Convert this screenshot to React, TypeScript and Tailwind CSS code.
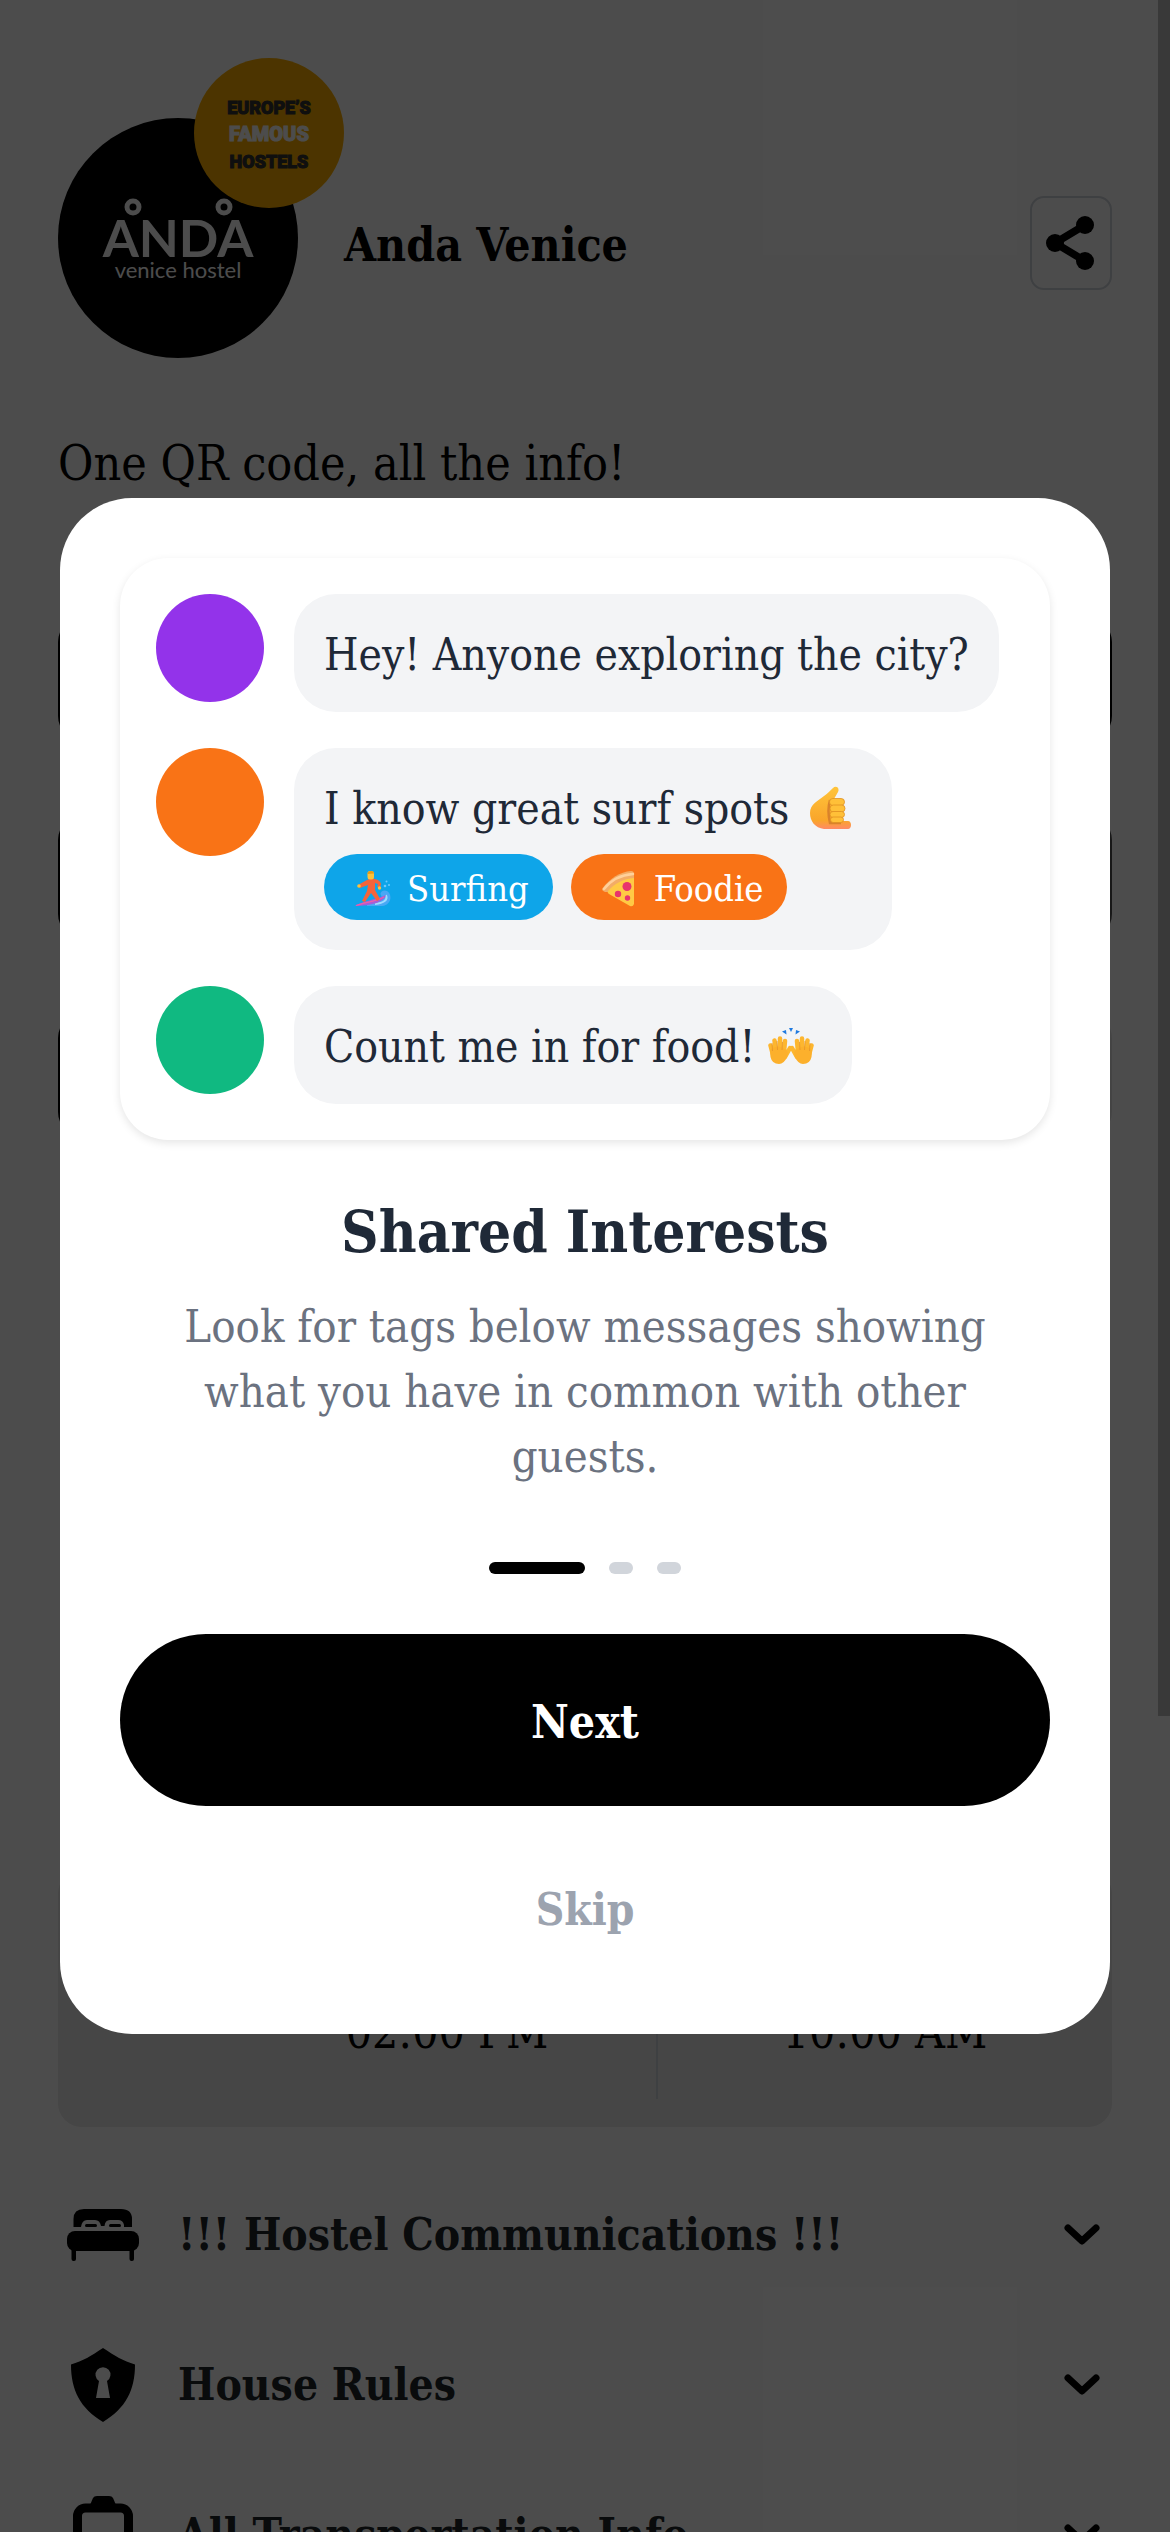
import type { ReactNode } from "react";

function AndaLogo() {
  return (
    <svg viewBox="0 0 240 240" className="size-60" role="img" aria-label="Anda venice hostel">
      <circle cx="120" cy="120" r="120" fill="#000" />
      <g fill="none" stroke="#fff" strokeWidth="5">
        <circle cx="75" cy="89" r="6" />
        <circle cx="166" cy="89" r="6" />
      </g>
      <g fill="#fff" textAnchor="middle" fontFamily="Lato, sans-serif">
        <text x="120" y="139" fontSize="52" fontWeight="700">ANDA</text>
        <text x="120" y="160" fontSize="22">venice hostel</text>
      </g>
    </svg>
  );
}

function FamousHostelsBadge() {
  return (
    <svg
      viewBox="0 0 150 150"
      className="absolute -top-15 left-34 size-[150px]"
      role="img"
      aria-label="Europe's Famous Hostels"
    >
      <circle cx="75" cy="75" r="75" fill="#ffb000" />
      <g textAnchor="middle" fontFamily="Roboto, sans-serif" fontWeight="900">
        <text x="75" y="56" fontSize="18" fill="#333" stroke="#333">EUROPE’S</text>
        <text x="75" y="83" fontSize="20" fill="#fff" stroke="#fff">FAMOUS</text>
        <text x="75" y="110" fontSize="18" fill="#333" stroke="#333">HOSTELS</text>
      </g>
    </svg>
  );
}

function ShareIcon() {
  return (
    <svg viewBox="0 0 50 56" className="h-14 w-[50px]" aria-hidden="true">
      <path d="M39 10 9 28l30 18" fill="none" stroke="#000" strokeWidth="7.5" />
      <circle cx="39" cy="10" r="9" />
      <circle cx="9" cy="28" r="9" />
      <circle cx="39" cy="46" r="9" />
    </svg>
  );
}

function BedIcon() {
  return (
    <svg viewBox="0 0 72 52" className="w-18" aria-hidden="true">
      <path d="M6.500 18V10Q6.500 0 17 0H54Q65 0 65 10V18H57V16Q56 11 51 11H43Q38 11 37.500 17H34Q33 11 28 11H20Q15 11 14 18Z" />
      <rect x="18" y="15" width="12" height="3" rx="1.500" />
      <rect x="42" y="15" width="12" height="3" rx="1.500" />
      <rect y="22" width="72" height="20" rx="8" />
      <rect x="4.500" y="36" width="4.500" height="16" rx="2" />
      <rect x="62.500" y="36" width="4.500" height="16" rx="2" />
    </svg>
  );
}

function ShieldIcon() {
  return (
    <svg viewBox="0 0 64 74" className="w-16" aria-hidden="true">
      <path d="M32 0C20 8 12 13 0 16.500C0 42 9 60 32 74C55 60 64 42 64 16.500C52 13 44 8 32 0Z" />
      <path d="M28 33A7.500 7.500 0 1 1 36 33L39 50H25Z" fill="#fff" />
    </svg>
  );
}

function ClipboardIcon() {
  return (
    <svg viewBox="0 0 60 78" className="w-15" aria-hidden="true">
      <rect x="4.500" y="12" width="51" height="61" rx="8" fill="none" stroke="#000" strokeWidth="9" />
      <path d="M17 16V9L20 2Q21 0 24 0H36Q39 0 40 2L43 9V16Z" />
    </svg>
  );
}

function Chevron() {
  return (
    <svg viewBox="0 0 36 22" className="w-9" aria-hidden="true">
      <path d="M4 4 18 17 32 4" fill="none" stroke="#000" strokeWidth="7" strokeLinecap="round" strokeLinejoin="round" />
    </svg>
  );
}

function CallMeHand() {
  return (
    <svg viewBox="0 0 42 44" className="mr-2.5 ml-2 inline-block h-11 w-[42px] align-[-6px]" role="img" aria-label="call me hand">
      <defs>
        <linearGradient id="hand" x1="0" y1="0" x2="0" y2="1">
          <stop offset="0" stopColor="#ffc43a" />
          <stop offset=".8" stopColor="#f9a52b" />
          <stop offset="1" stopColor="#ff8a65" />
        </linearGradient>
      </defs>
      <path
        d="M23 2C26-1 30 2 28 6L24 13 29 35H38C42 35 42 43 38 43H14C5 42 0 35 0 27C0 18 8 15 14 10C18 7 20 5 23 2Z"
        fill="url(#hand)"
      />
      <path d="M20 14Q17 24 20 37H31" fill="none" stroke="#d9822b" strokeWidth="2.500" />
      <g fill="#ffc038" stroke="#e08f22" strokeWidth=".8">
        <rect x="19.500" y="12.500" width="15" height="7" rx="3.400" />
        <rect x="20" y="19" width="15" height="7" rx="3.400" />
        <rect x="20" y="25.500" width="14.500" height="6" rx="3" />
        <rect x="20.500" y="31" width="13" height="5.500" rx="2.700" />
      </g>
    </svg>
  );
}

function RaisingHands() {
  const hand = (
    <>
      <g fill="none" stroke="#fdb62f" strokeWidth="4.500" strokeLinecap="round">
        <path d="M5 27 2.500 17.500M8 24 6.500 12.500M12 22V10.500M16 24 17 13M17 29 22 20" />
      </g>
      <path d="M2 22Q10 15 18 22Q21 24 19 29Q16 36 11 36Q4 36 2.500 29Z" fill="#fcb02c" />
      <path d="M4.500 23 4 15M9.500 22 9 13M14 22 14.500 14" stroke="#e5942a" strokeWidth=".8" fill="none" />
    </>
  );
  return (
    <svg viewBox="0 0 46 36" className="mr-2 inline-block h-9 w-[46px] align-[-2px]" role="img" aria-label="raising hands">
      {hand}
      <g transform="matrix(-1 0 0 1 46 0)">{hand}</g>
      <path d="M14 3.500 18 2 18.500 6.500ZM21 0H25L23 4ZM28 2 32 3.500 27.500 6.500Z" fill="#1f7ae0" />
    </svg>
  );
}

function Surfer() {
  return (
    <svg viewBox="0 0 36 36" className="size-9" role="img" aria-label="surfer">
      <path d="M12 33C24 31 28 28 26 24C24 22 28 18 32 20C38 24 36 34 27 35H12Z" fill="#4aa8f5" />
      <path d="M20 33C29 32 33 29 31 24" fill="none" stroke="#9fdcff" strokeWidth="2" />
      <path d="M0 35C10 29 20 29 31 24C29 31 16 35 0 35Z" fill="#a45fd6" />
      <path d="M1 34.500C10 31 20 31 29 26" fill="none" stroke="#ef5da8" strokeWidth="1.200" />
      <path d="M12 9Q16 7 20 8Q25 9 26 13L25 17 22 16 23 13 20 12 20 19 25 28 22 30 16 22 10 31 7 30 12 20 13 14 5 17 3 14Z" fill="#f4643a" />
      <circle cx="4" cy="15" r="1.800" fill="#fdc23a" />
      <circle cx="24.500" cy="17" r="1.700" fill="#fdc23a" />
      <rect x="12.500" y="0" width="6.500" height="8.500" rx="2.500" fill="#fdc23a" />
      <path d="M12.500 3Q12.500 0 16 0Q19 0 19 2.500Z" fill="#e59a17" />
      <g fill="#6fc8fb">
        <circle cx="30" cy="15" r="1.300" />
        <circle cx="34" cy="14" r="1" />
        <circle cx="31.500" cy="10.500" r="1" />
      </g>
    </svg>
  );
}

function Pizza() {
  return (
    <svg viewBox="0 0 36 36" className="size-9" role="img" aria-label="pizza">
      <path d="M0 18C8 7 18 1 29 0Q32 0 32 3V9L9 21 3 21Q0 20 0 18Z" fill="#f3ac66" />
      <path d="M2 18C9 9 18 4 31 3" fill="none" stroke="#ffd09a" strokeWidth="2.500" strokeLinecap="round" />
      <path d="M6 20C13 12 21 8 32 7V33Q31 36 28 35L7 23Q5 22 6 20Z" fill="#ffca45" />
      <g fill="#e8336d">
        <circle cx="25" cy="15.500" r="4.500" />
        <circle cx="16" cy="23" r="3.200" />
        <circle cx="25.500" cy="27" r="2.700" />
      </g>
    </svg>
  );
}

function Message({ avatar, children }: { avatar: string; children: ReactNode }) {
  return (
    <li className="flex items-start gap-[30px]">
      <span className={`size-27 shrink-0 rounded-full ${avatar}`} />
      <div className="rounded-[42px] bg-[#f3f4f6] px-[30px] pt-8 pb-7 text-[44px] leading-[58px] text-[#1f2937]">
        {children}
      </div>
    </li>
  );
}

function Tag({ color, icon, label }: { color: string; icon: ReactNode; label: string }) {
  return (
    <span className={`flex h-[66px] items-center gap-4 rounded-full pt-1 pr-6 pl-[31px] text-[36px] text-white ${color}`}>
      {icon}
      {label}
    </span>
  );
}

const sections = [
  { title: "!!! Hostel Communications !!!", icon: <BedIcon /> },
  { title: "House Rules", icon: <ShieldIcon /> },
  { title: "All Transportation Info", icon: <ClipboardIcon /> },
];

export default function App() {
  return (
    <div className="relative h-screen overflow-hidden bg-white font-['Roboto_Slab','DejaVu_Serif_Condensed','DejaVu_Serif',serif] text-black">
      <main className="px-[58px] pt-[118px]">
        <header className="flex h-[250px] items-center">
          <div className="relative self-start">
            <AndaLogo />
            <FamousHostelsBadge />
          </div>
          <h1 className="ml-[46px] flex-1 pt-1 text-[46px] font-bold">Anda Venice</h1>
          <button
            type="button"
            aria-label="Share"
            className="flex h-[94px] w-[82px] items-center justify-center rounded-[14px] border-2 border-gray-300"
          >
            <ShareIcon />
          </button>
        </header>

        <p className="mt-[59px] text-[48px] leading-[72px]">One QR code, all the info!</p>

        <div className="mt-[119px] flex flex-col gap-19">
          <div className="h-[122px] rounded-3xl bg-black" />
          <div className="h-[122px] rounded-3xl bg-linear-to-r from-black to-neutral-600" />
          <div className="h-[122px] rounded-3xl bg-linear-to-r from-black to-neutral-200" />
        </div>

        <section className="mt-[734px] grid h-[257px] grid-cols-[180px_420px_1fr] rounded-3xl bg-[#e9e9e9] pb-7 text-center text-[46px]">
          <p className="col-start-2 flex items-end justify-center border-r-2 border-gray-300 pb-8">02:00 PM</p>
          <p className="flex items-end justify-center pb-8">10:00 AM</p>
        </section>

        <div className="mt-[33px]">
          {sections.map((s) => (
            <button key={s.title} type="button" className="flex h-[150px] w-full items-center pr-3 text-left">
              <span className="flex w-[90px] justify-center">{s.icon}</span>
              <span className="ml-[30px] flex-1 text-[44px] font-bold text-[#212529]">{s.title}</span>
              <Chevron />
            </button>
          ))}
        </div>
      </main>

      <div className="absolute inset-0 flex items-center justify-center bg-black/70 px-15">
        <div role="dialog" aria-modal="true" aria-labelledby="dialog-title" className="w-full rounded-[72px] bg-white p-15 text-center">
          <ul className="flex flex-col gap-9 rounded-[48px] p-9 text-left shadow-[0_3px_9px_rgba(0,0,0,0.1)]">
            <Message avatar="bg-[#9333ea]">Hey! Anyone exploring the city?</Message>
            <Message avatar="bg-[#f97316]">
              <p>
                I know great surf spots <CallMeHand />
              </p>
              <div className="mt-4 mb-0.5 flex gap-[18px]">
                <Tag color="bg-[#0ea5e9]" icon={<Surfer />} label="Surfing" />
                <Tag color="bg-[#f97316]" icon={<Pizza />} label="Foodie" />
              </div>
            </Message>
            <Message avatar="bg-[#10b981]">
              Count me in for food! <RaisingHands />
            </Message>
          </ul>

          <h2 id="dialog-title" className="mt-[50px] text-[58px] leading-[84px] font-bold text-[#1f2937]">
            Shared Interests
          </h2>
          <p className="mt-5 px-9 text-[45px] leading-[65px] text-[#6b7280]">
            Look for tags below messages showing what you have in common with other guests.
          </p>

          <div className="mt-[73px] flex justify-center gap-6">
            <span className="h-3 w-24 rounded-full bg-black" />
            <span className="h-3 w-6 rounded-full bg-[#d1d5db]" />
            <span className="h-3 w-6 rounded-full bg-[#d1d5db]" />
          </div>

          <button type="button" className="mt-15 h-[172px] w-full rounded-full bg-black pt-1 text-[46px] font-bold text-white">
            Next
          </button>
          <button type="button" className="mt-9 h-[132px] w-full pt-1 text-[44px] font-bold text-[#9ca3af]">
            Skip
          </button>
        </div>
      </div>

      <div className="absolute top-0 right-0 h-[1716px] w-3 bg-[#393939]" />
    </div>
  );
}
